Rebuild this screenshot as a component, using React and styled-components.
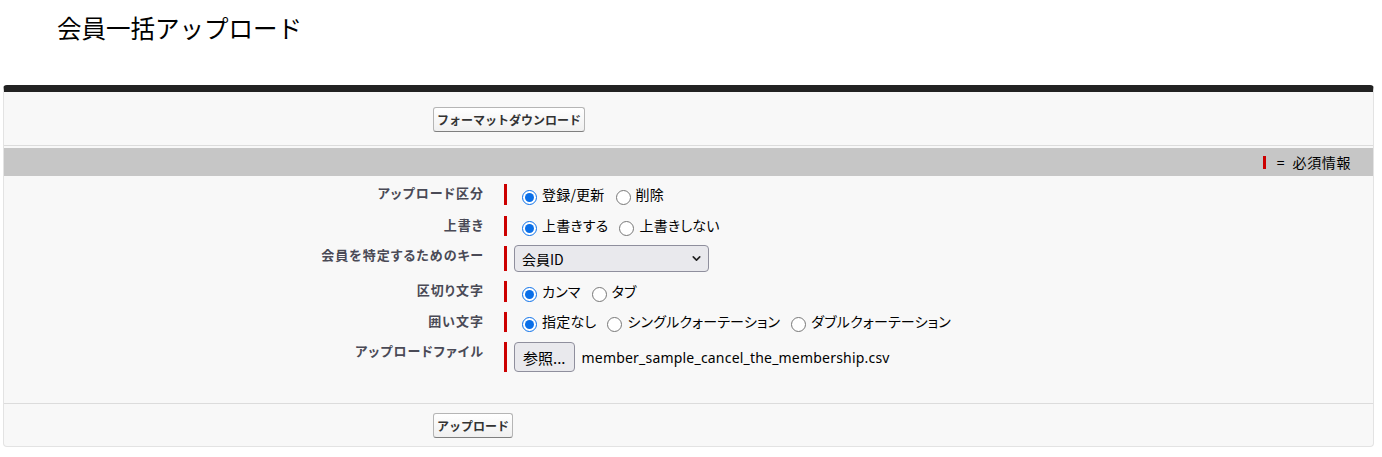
import React from 'react'
import styled, { createGlobalStyle } from 'styled-components'
import { ChevronDown } from 'lucide-react'

const GlobalStyle = createGlobalStyle`
  body {
    margin: 0;
    background: #fff;
    font-family: "Noto Sans CJK JP", "Noto Sans", sans-serif;
    color: #000;
  }
`

const rows = [
  { label: 'アップロード区分', h: 21, kind: 'radio', name: 'kbn', options: ['登録/更新', '削除'] },
  { label: '上書き', h: 20, kind: 'radio', name: 'overwrite', options: ['上書きする', '上書きしない'] },
  { label: '会員を特定するためのキー', h: 25, kind: 'select' },
  { label: '区切り文字', h: 21, kind: 'radio', name: 'sep', options: ['カンマ', 'タブ'] },
  { label: '囲い文字', h: 20, kind: 'radio', name: 'quote', options: ['指定なし', 'シングルクォーテーション', 'ダブルクォーテーション'] },
  { label: 'アップロードファイル', h: 30, kind: 'file' },
]

const App = () => {
  const renderField = (row) => {
    if (row.kind === 'radio') {
      return (
        <RadioGroup>
          {row.options.map((opt, i) => (
            <Option key={opt}>
              <Radio type="radio" name={row.name} defaultChecked={i === 0} />
              <OptionText>{opt}</OptionText>
            </Option>
          ))}
        </RadioGroup>
      )
    }
    if (row.kind === 'select') {
      return (
        <SelectWrap>
          <Select defaultValue="id">
            <option value="id">会員ID</option>
            <option value="mail">メールアドレス</option>
          </Select>
          <SelectArrow>
            <ChevronDown size={13} strokeWidth={3} />
          </SelectArrow>
        </SelectWrap>
      )
    }
    return (
      <FileField>
        <BrowseButton type="button">参照...</BrowseButton>
        <FileName>member_sample_cancel_the_membership.csv</FileName>
      </FileField>
    )
  }

  return (
    <Page>
      <GlobalStyle />
      <Title>会員一括アップロード</Title>
      <Panel>
        <ButtonBar>
          <Btn type="button">フォーマットダウンロード</Btn>
        </ButtonBar>
        <SubHeader>
          <Legend>
            <LegendBar />
            <span>=&nbsp;&nbsp;必須情報</span>
          </Legend>
        </SubHeader>
        <Form>
          {rows.map((row, idx) => (
            <Row key={row.label} $first={idx === 0}>
              <Label>{row.label}</Label>
              <Data $h={row.h}>
                <RequiredBar />
                {renderField(row)}
              </Data>
            </Row>
          ))}
        </Form>
        <ButtonBar $bottom>
          <Btn type="button">アップロード</Btn>
        </ButtonBar>
      </Panel>
    </Page>
  )
}

const Page = styled.div`
  padding: 0 8px 10px 3px;
`
const Title = styled.h1`
  margin: 0;
  height: 85px;
  box-sizing: border-box;
  padding: 13px 0 0 54px;
  font-size: 24.5px;
  line-height: 30px;
  font-weight: 400;
  color: #000;
`
const Panel = styled.div`
  background: #f8f8f8;
  border: 1px solid #e3e3e3;
  border-top: 7px solid #222;
  border-radius: 4px;
`
const ButtonBar = styled.div`
  display: flex;
  align-items: flex-start;
  box-sizing: border-box;
  padding-left: 429px;
  height: ${({ $bottom }) => ($bottom ? '43px' : '54px')};
  padding-top: ${({ $bottom }) => ($bottom ? '9px' : '15px')};
  border-bottom: ${({ $bottom }) => ($bottom ? 'none' : '1px solid #dcdcdc')};
  border-top: ${({ $bottom }) => ($bottom ? '1px solid #dcdcdc' : 'none')};
`
const Btn = styled.button`
  font-family: "Noto Sans CJK JP", sans-serif;
  font-size: 12px;
  font-weight: 700;
  line-height: 15px;
  color: #333;
  padding: 4px 3px;
  border: 1px solid #b5b5b5;
  border-bottom-color: #7f7f7f;
  border-radius: 3px;
  background: linear-gradient(#ffffff, #f0f0f0);
  cursor: pointer;
`
const SubHeader = styled.div`
  margin-top: 2px;
  height: 28px;
  background: #c6c6c6;
  display: flex;
  align-items: center;
  justify-content: flex-end;
  padding-right: 22px;
`
const Legend = styled.span`
  display: flex;
  align-items: center;
  gap: 11px;
  font-size: 14px;
  line-height: 18px;
  letter-spacing: 0.6px;
  color: #000;
`
const LegendBar = styled.span`
  width: 3px;
  height: 13px;
  background: #c00;
`
const Form = styled.div`
  padding: 3px 0 26px;
`
const Row = styled.div`
  display: grid;
  grid-template-columns: 490px 1fr;
  padding: ${({ $first }) => ($first ? '5px 0 6px' : '5px 0')};
`
const Label = styled.div`
  text-align: right;
  padding: 1px 10px 0 0;
  font-size: 13px;
  line-height: 15px;
  font-weight: 700;
  letter-spacing: 1px;
  font-feature-settings: "palt";
  color: #4a4a56;
`
const Data = styled.div`
  display: flex;
  align-items: stretch;
  gap: 7px;
  padding-left: 10px;
  height: ${({ $h }) => $h}px;
`
const RequiredBar = styled.span`
  width: 3px;
  flex: none;
  background: #c00;
`
const RadioGroup = styled.div`
  display: flex;
  align-items: flex-end;
  gap: 11px;
  padding-left: 8px;
`
const Option = styled.label`
  display: flex;
  align-items: flex-end;
  font-size: 14px;
  line-height: 19px;
`
const Radio = styled.input`
  width: 15px;
  height: 15px;
  margin: 0 5px 0 0;
  accent-color: #0a6fe8;
`
const OptionText = styled.span`
  font-feature-settings: "palt";
  letter-spacing: 0.2px;
  padding-bottom: 1px;
`
const SelectWrap = styled.div`
  position: relative;
  width: 195px;
  margin-top: -1px;
  height: 27px;
`
const Select = styled.select`
  appearance: none;
  width: 100%;
  height: 100%;
  box-sizing: border-box;
  padding: 0 24px 0 7px;
  font-family: "Noto Sans CJK JP", sans-serif;
  font-size: 14px;
  color: #000;
  background: #e9e9ed;
  border: 1px solid #8f8f9d;
  border-radius: 4px;
`
const SelectArrow = styled.span`
  position: absolute;
  right: 6px;
  top: 7px;
  display: flex;
  color: #222;
  pointer-events: none;
`
const FileField = styled.div`
  display: flex;
  align-items: center;
  gap: 7px;
`
const BrowseButton = styled.button`
  height: 30px;
  padding: 0 8px;
  font-family: "Noto Sans CJK JP", sans-serif;
  font-size: 15px;
  color: #000;
  background: #e9e9ed;
  border: 1px solid #8f8f9d;
  border-radius: 4px;
`
const FileName = styled.span`
  font-family: "Noto Sans", sans-serif;
  font-size: 14px;
  letter-spacing: 0.2px;
  color: #000;
`

export default App
